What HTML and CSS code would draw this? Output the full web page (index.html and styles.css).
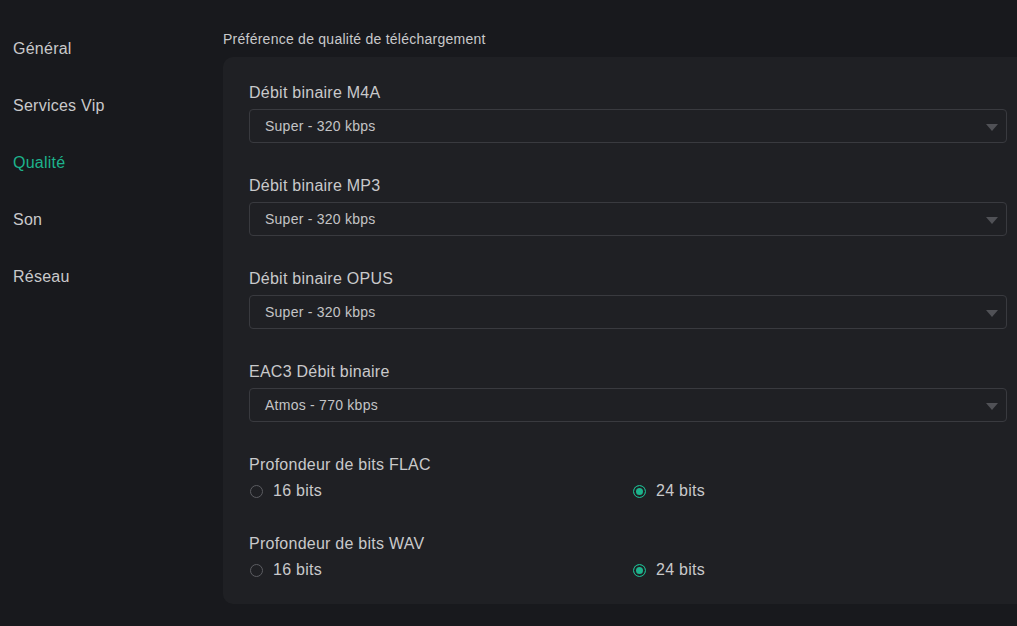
FILE: index.html
```html
<!DOCTYPE html>
<html lang="fr">
<head>
<meta charset="utf-8">
<title>Paramètres - Qualité</title>
<link rel="stylesheet" href="styles.css">
</head>
<body>
<div class="layout">
  <nav class="sidebar">
    <div class="nav-item">Général</div>
    <div class="nav-item">Services Vip</div>
    <div class="nav-item active">Qualité</div>
    <div class="nav-item">Son</div>
    <div class="nav-item">Réseau</div>
  </nav>
  <main class="main">
    <div class="section-title">Préférence de qualité de téléchargement</div>
    <div class="card">
      <div class="field">
        <div class="label">Débit binaire M4A</div>
        <div class="select"><span>Super - 320 kbps</span><i class="caret"></i></div>
      </div>
      <div class="field">
        <div class="label">Débit binaire MP3</div>
        <div class="select"><span>Super - 320 kbps</span><i class="caret"></i></div>
      </div>
      <div class="field">
        <div class="label">Débit binaire OPUS</div>
        <div class="select"><span>Super - 320 kbps</span><i class="caret"></i></div>
      </div>
      <div class="field">
        <div class="label">EAC3 Débit binaire</div>
        <div class="select"><span>Atmos - 770 kbps</span><i class="caret"></i></div>
      </div>
      <div class="field">
        <div class="label">Profondeur de bits FLAC</div>
        <div class="radios">
          <div class="radio"><span class="dot"></span>16 bits</div>
          <div class="radio checked"><span class="dot"></span>24 bits</div>
        </div>
      </div>
      <div class="field">
        <div class="label">Profondeur de bits WAV</div>
        <div class="radios">
          <div class="radio"><span class="dot"></span>16 bits</div>
          <div class="radio checked"><span class="dot"></span>24 bits</div>
        </div>
      </div>
    </div>
  </main>
</div>
</body>
</html>
```

FILE: styles.css
```css
html, body {
  margin: 0;
  padding: 0;
  overflow: hidden;
  background: #18191d;
}
body {
  font-family: "Liberation Sans", Arial, sans-serif;
  color: #c9c9cb;
  letter-spacing: 0.25px;
  width: 1017px;
  height: 626px;
}
.layout {
  display: flex;
  width: 1040px;
}
.sidebar {
  width: 223px;
  flex: none;
  padding-top: 39px;
  display: flex;
  flex-direction: column;
  gap: 37px;
}
.nav-item {
  font-size: 16px;
  line-height: 20px;
  height: 20px;
  padding-left: 13px;
  color: #c9c9cb;
}
.nav-item.active {
  color: #1db38c;
}
.main {
  flex: none;
  width: 810px;
}
.section-title {
  font-size: 14px;
  line-height: 18px;
  margin-top: 30px;
  margin-bottom: 9px;
  color: #c9c9cb;
}
.card {
  background: #1f2024;
  border-radius: 10px;
  padding: 26px 26px 24px 26px;
  display: flex;
  flex-direction: column;
  gap: 33px;
}
.field {
  display: flex;
  flex-direction: column;
}
.label {
  font-size: 16px;
  line-height: 20px;
  margin-bottom: 6px;
  color: #c9c9cb;
}
.select {
  height: 32px;
  border: 1px solid #393a3f;
  border-radius: 4px;
  display: flex;
  align-items: center;
  justify-content: space-between;
  padding: 0 8px 0 15px;
  font-size: 14px;
  color: #c4c4c6;
}
.caret {
  width: 0;
  height: 0;
  border-left: 6px solid transparent;
  border-right: 6px solid transparent;
  border-top: 7px solid #505156;
  margin-top: 2px;
}
.radios {
  display: grid;
  grid-template-columns: 383px 1fr;
}
.radio {
  display: flex;
  align-items: center;
  font-size: 16px;
  line-height: 20px;
  color: #c9c9cb;
}
.dot {
  width: 11px;
  height: 11px;
  border: 1px solid #5c5d62;
  border-radius: 50%;
  margin-left: 1px;
  margin-right: 10px;
  box-sizing: content-box;
}
.radio.checked .dot {
  border-color: #1db38c;
  background: #1db38c;
  box-shadow: inset 0 0 0 2px #1f2024;
}
```
